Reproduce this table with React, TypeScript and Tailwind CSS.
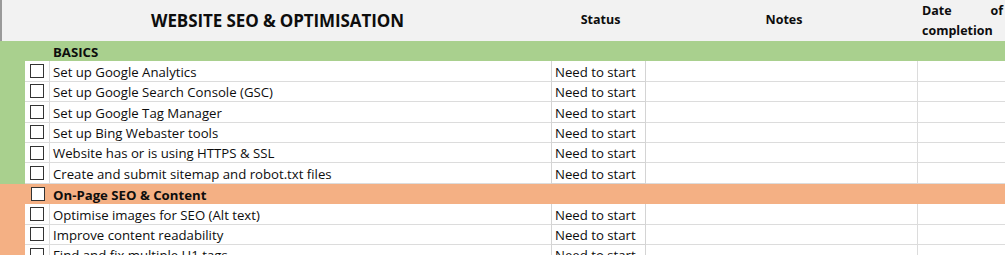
import React from "react";

type Row = { task: string; status?: string; section: "basics" | "onpage"; heading?: boolean; check?: boolean };

const rows: Row[] = [
  { task: "BASICS", section: "basics", heading: true, check: false },
  { task: "Set up Google Analytics", status: "Need to start", section: "basics", check: true },
  { task: "Set up Google Search Console (GSC)", status: "Need to start", section: "basics", check: true },
  { task: "Set up Google Tag Manager", status: "Need to start", section: "basics", check: true },
  { task: "Set up Bing Webaster tools", status: "Need to start", section: "basics", check: true },
  { task: "Website has or is using HTTPS & SSL", status: "Need to start", section: "basics", check: true },
  { task: "Create and submit sitemap and robot.txt files", status: "Need to start", section: "basics", check: true },
  { task: "On-Page SEO & Content", section: "onpage", heading: true, check: true },
  { task: "Optimise images for SEO (Alt text)", status: "Need to start", section: "onpage", check: true },
  { task: "Improve content readability", status: "Need to start", section: "onpage", check: true },
  { task: "Find and fix multiple H1 tags", status: "Need to start", section: "onpage", check: true },
];

function Box() {
  return <div className="w-[14px] h-[14px] border border-[#333] bg-white" />;
}

export default function App() {
  return (
    <div
      className="w-[1005px] h-[255px] overflow-hidden bg-white text-[#0d0d0d] text-[13.2px]"
      style={{ fontFamily: '"Open Sans", "Noto Sans", sans-serif' }}
    >
      {/* header */}
      <div className="grid grid-cols-[551px_95px_272px_87px] h-[41px] bg-[#f2f2f2] border-l-2 border-[#9a9a9a] items-center font-bold">
        <div className="text-center text-[17px] tracking-[-0.1px] pt-[1px]">WEBSITE SEO &amp; OPTIMISATION</div>
        <div className="text-center text-[12.5px]">Status</div>
        <div className="text-center text-[12.5px]">Notes</div>
        <div className="pl-[2px] pr-[4px] leading-[20px] mt-[1px] text-[12.5px]">
          <div className="flex justify-between">
            <span>Date</span>
            <span>of</span>
          </div>
          <div>completion</div>
        </div>
      </div>

      {rows.map((r, i) => {
        const strip = r.section === "basics" ? "bg-[#a9d08e]" : "bg-[#f4b084]";
        if (r.heading) {
          return (
            <div key={i} className={`grid grid-cols-[25px_25px_1fr] h-[20.4px] ${strip} font-bold leading-[16px]`}>
              <div />
              <div className="flex items-center justify-center">{r.check && <Box />}</div>
              <div className="flex items-end pb-[1px] pl-[3px]">{r.task}</div>
            </div>
          );
        }
        return (
          <div key={i} className="grid grid-cols-[25px_25px_501px_95px_272px_87px] h-[20.4px] leading-[16px]">
            <div className={strip} />
            <div className="flex items-center justify-center border-b border-[#dcdcdc] border-r">
              {r.check && <Box />}
            </div>
            <div className="flex items-end pb-[1px] pl-[3px] border-b border-[#dcdcdc]">{r.task}</div>
            <div className="flex items-end pb-[1px] pl-[3px] border-b border-x border-[#d4d4d4]">{r.status}</div>
            <div className="border-b border-r border-[#dcdcdc]" />
            <div className="border-b border-[#dcdcdc]" />
          </div>
        );
      })}
    </div>
  );
}
